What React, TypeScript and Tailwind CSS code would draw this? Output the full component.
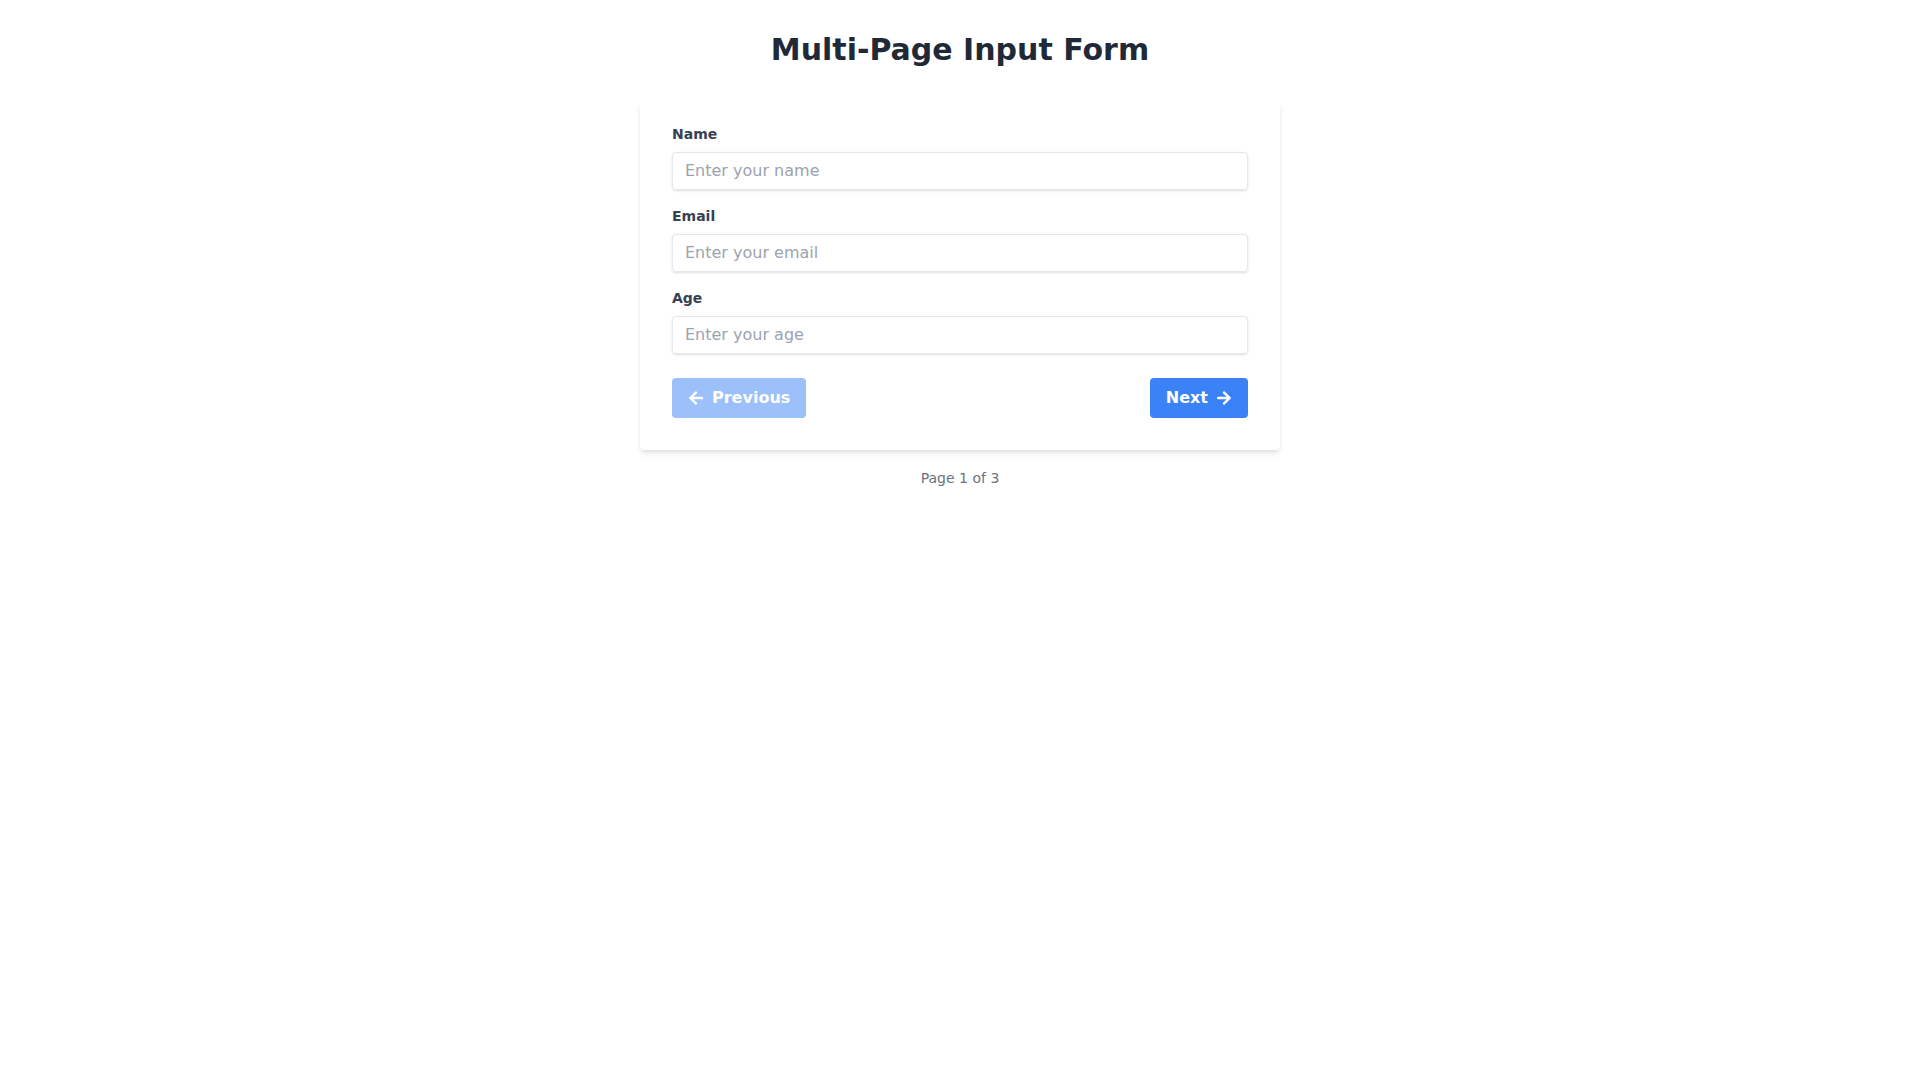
import React, { useState } from "react";
import { FaArrowLeft, FaArrowRight } from "react-icons/fa";

type Field = { name: string; label: string; type: string; placeholder: string };

const PAGES: Field[][] = [
  [
    { name: "name", label: "Name", type: "text", placeholder: "Enter your name" },
    { name: "email", label: "Email", type: "email", placeholder: "Enter your email" },
    { name: "age", label: "Age", type: "number", placeholder: "Enter your age" },
  ],
  [
    { name: "address", label: "Address", type: "text", placeholder: "Enter your address" },
    { name: "city", label: "City", type: "text", placeholder: "Enter your city" },
    { name: "zip", label: "Zip Code", type: "text", placeholder: "Enter your zip code" },
  ],
  [
    { name: "username", label: "Username", type: "text", placeholder: "Choose a username" },
    { name: "password", label: "Password", type: "password", placeholder: "Choose a password" },
    { name: "confirm", label: "Confirm Password", type: "password", placeholder: "Repeat your password" },
  ],
];

export default function App() {
  const [page, setPage] = useState(0);
  const [values, setValues] = useState<Record<string, string>>({});

  const fields = PAGES[page];
  const isFirst = page === 0;
  const isLast = page === PAGES.length - 1;

  const update = (key: string, value: string) =>
    setValues((prev) => ({ ...prev, [key]: value }));

  return (
    <div className="min-h-screen bg-white py-8 font-['DejaVu_Sans',sans-serif]">
      <h1 className="text-3xl font-bold text-[#1f2937] text-center mb-8">Multi-Page Input Form</h1>

      <div className="w-full max-w-[640px] mx-auto">
        <form
          className="bg-white shadow-md rounded px-8 pt-6 pb-8 mb-[18px]"
          onSubmit={(e) => e.preventDefault()}
        >
          {fields.map((field) => (
            <div key={field.name} className="mb-4">
              <label htmlFor={field.name} className="block text-[#374151] text-sm font-bold mb-2">
                {field.label}
              </label>
              <input
                id={field.name}
                type={field.type}
                placeholder={field.placeholder}
                value={values[field.name] ?? ""}
                onChange={(e) => update(field.name, e.target.value)}
                className="shadow appearance-none border border-[#e5e7eb] rounded w-full py-2 px-3 text-base text-[#374151] leading-tight placeholder:text-[#9ca3af] focus:outline-none"
              />
            </div>
          ))}

          {/* Navigation */}
          <div className="flex items-center justify-between mt-6">
            <button
              type="button"
              disabled={isFirst}
              onClick={() => setPage((p) => Math.max(0, p - 1))}
              className="flex items-center bg-[#3b82f6] hover:bg-[#1d4ed8] text-white font-bold py-2 px-4 rounded disabled:opacity-50 disabled:hover:bg-[#3b82f6]"
            >
              <FaArrowLeft className="mr-2" />
              Previous
            </button>
            <button
              type="button"
              onClick={() => setPage((p) => Math.min(PAGES.length - 1, p + 1))}
              className="flex items-center bg-[#3b82f6] hover:bg-[#1d4ed8] text-white font-bold py-2 px-4 rounded"
            >
              {isLast ? "Submit" : "Next"}
              <FaArrowRight className="ml-2" />
            </button>
          </div>
        </form>

        <p className="text-center text-[#6b7280] text-sm">
          Page {page + 1} of {PAGES.length}
        </p>
      </div>
    </div>
  );
}
